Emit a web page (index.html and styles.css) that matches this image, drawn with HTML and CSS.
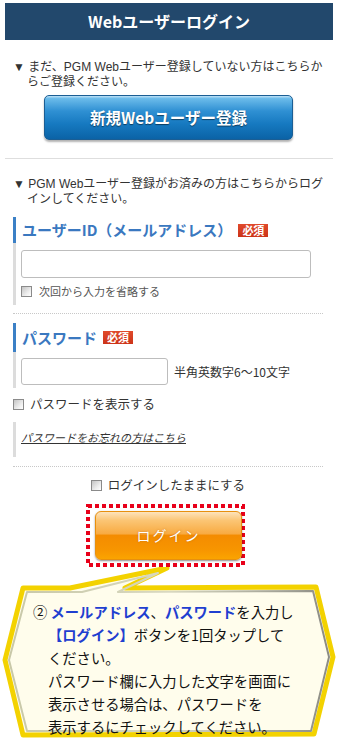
FILE: index.html
```html
<!DOCTYPE html>
<html lang="ja">
<head>
<meta charset="utf-8">
<title>Webユーザーログイン</title>
<link rel="stylesheet" href="styles.css">
</head>
<body>
<div class="page">
  <header class="header">Webユーザーログイン</header>
  <section class="register">
    <p class="note">▼ まだ、PGM Webユーザー登録していない方はこちらか<br>らご登録ください。</p>
    <a class="btn-blue" href="#">新規Webユーザー登録</a>
  </section>
  <div class="divider"></div>
  <section class="login">
    <p class="note">▼ PGM Webユーザー登録がお済みの方はこちらからログ<br>インしてください。</p>
    <div class="field">
      <div class="label-row"><span class="label">ユーザーID（メールアドレス）</span><span class="req">必須</span></div>
      <div class="field-body">
        <input class="input input-wide" type="text">
        <label class="check small"><input type="checkbox" class="cb"><span>次回から入力を省略する</span></label>
      </div>
    </div>
    <div class="dotted"></div>
    <div class="field pw">
      <div class="label-row pw-row"><span class="label">パスワード</span><span class="req pw-req">必須</span></div>
      <div class="field-body row">
        <input class="input input-short" type="password"><span class="hint">半角英数字6～10文字</span>
      </div>
    </div>
    <label class="check show-pw"><input type="checkbox" class="cb"><span>パスワードを表示する</span></label>
    <div class="forgot"><a href="#">パスワードをお忘れの方はこちら</a></div>
    <div class="dotted second"></div>
    <label class="check keep"><input type="checkbox" class="cb"><span>ログインしたままにする</span></label>
    <div class="login-frame">
      <svg class="frame-svg" width="159" height="63" viewBox="0 0 159 63"><rect x="2" y="2" width="155" height="59" fill="none" stroke="#e8001a" stroke-width="4" stroke-dasharray="4 3"/></svg>
      <a class="btn-orange" href="#">ログイン</a>
    </div>
  </section>
  <div class="callout">
    <svg class="callout-bg" width="340" height="171" viewBox="0 0 340 171">
      <defs>
        <linearGradient id="bevel" x1="0" y1="0" x2="1" y2="0">
          <stop offset="0" stop-color="#c8c8a8"/>
          <stop offset="0.5" stop-color="#d8d8c0"/>
          <stop offset="1" stop-color="#8c8c84"/>
        </linearGradient>
      </defs>
      <polygon points="23,21 70,21 167,1 125,21 316,20 333,90 314,167 23,168 5,93" fill="#fffdec" stroke="#f3d200" stroke-width="5" stroke-linejoin="round"/>
      <polygon points="27,25 82,25 158,6 118,25 313,24 329,90 311,164 27,164 9,93" fill="none" stroke="url(#bevel)" stroke-width="2" stroke-linejoin="round"/>
    </svg>
    <p class="callout-text">②&nbsp;<span class="blue">メールアドレス</span>、<span class="blue">パスワード</span>を入力し<br><span class="blue">【ログイン】</span>ボタンを1回タップして<br>ください。<br>パスワード欄に入力した文字を画面に<br>表示させる場合は、パスワードを<br>表示するにチェックしてください。</p>
  </div>
</div>
</body>
</html>
```

FILE: styles.css
```css
* { box-sizing: border-box; }
html, body { margin: 0; padding: 0; background: #fff; }
body {
  width: 340px;
  font-family: "Noto Sans CJK JP", "Noto Sans", sans-serif;
  color: #333;
}
.page { width: 340px; overflow: hidden; }

.header {
  margin: 3px 7px 0 5px;
  height: 37px;
  background: #22486c;
  color: #fff;
  font-weight: bold;
  font-size: 16px;
  line-height: 37px;
  text-align: center;
}

.register { margin: 0 7px 0 5px; }
.note {
  margin: 20px 0 0 8px;
  padding-left: 14px;
  text-indent: -14px;
  font-family: "Liberation Sans", "Noto Sans CJK JP", sans-serif;
  font-size: 12px;
  line-height: 15px;
  white-space: nowrap;
}

.btn-blue {
  display: block;
  margin: 5px 0 0 39px;
  width: 249px;
  height: 45px;
  border: 1px solid #1b5e94;
  border-radius: 5px;
  background: linear-gradient(#bfe2f7 0%, #6bbbea 6%, #2f90d3 35%, #1679c0 65%, #0b63a6 100%);
  box-shadow: 0 2px 2px rgba(0, 0, 0, 0.3);
  color: #fff;
  font-weight: bold;
  font-size: 15.5px;
  line-height: 43px;
  text-align: center;
  text-decoration: none;
  text-shadow: 0 1px 1px rgba(0, 0, 0, 0.5);
}

.divider {
  margin: 18px 7px 0 5px;
  height: 1px;
  background: #dedede;
}

.login { padding: 0 17px 0 13px; }
.login .note { margin: 18px 0 0 0; }

.field { margin-top: 10px; }
.field.pw { margin-top: 9px; }
.label-row {
  display: flex;
  align-items: center;
  height: 26px;
  padding-left: 6px;
  border-left: 3px solid #3b80c6;
}
.label-row.pw-row { height: 29px; }
.label {
  color: #3a78c0;
  font-weight: bold;
  font-size: 15px;
  line-height: 20px;
}
.req {
  width: 30px;
  height: 13px;
  margin-left: 6px;
  background: linear-gradient(#e04a2c, #cc3318);
  color: #fff;
  font-weight: bold;
  font-size: 11px;
  line-height: 13px;
  text-align: center;
}
.req.pw-req { margin-left: 6px; }

.field-body {
  border-left: 3px solid #dcdcdc;
  padding: 7px 0 7px 5px;
}
.field-body.row {
  display: flex;
  align-items: center;
  padding: 6px 0 3px 5px;
}
.input {
  display: block;
  margin: 0;
  padding: 0 4px;
  height: 28px;
  border: 1px solid #bdbdbd;
  border-radius: 3px;
  background: #fff;
}
.input-wide { width: 290px; }
.input-short { width: 147px; height: 27px; }
.hint { margin-left: 6px; font-size: 12px; line-height: 16px; }

.check {
  display: flex;
  align-items: center;
  gap: 6px;
  font-size: 12.5px;
  line-height: 16px;
}
.check.small {
  margin-top: 6px;
  gap: 7px;
  font-size: 11px;
  line-height: 14px;
  color: #555;
}
.cb {
  -webkit-appearance: none;
  appearance: none;
  flex: none;
  width: 11px;
  height: 11px;
  margin: 0;
  border: 1px solid #8a8a8a;
  background: linear-gradient(135deg, #c4c4c4, #efefef 65%, #fff);
}
.show-pw { margin-top: 8px; }

.forgot {
  margin-top: 10px;
  border-left: 3px solid #dcdcdc;
  padding: 7px 0 12px 5px;
  font-size: 11px;
  line-height: 16px;
}
.forgot a { color: #333; font-style: italic; text-decoration: underline; }

.dotted { margin-top: 8px; border-top: 1px dotted #c8c8c8; }
.dotted.second { margin-top: 9px; }

.keep { justify-content: center; margin-top: 10px; }

.login-frame {
  position: relative;
  margin: 11px 0 0 73px;
  width: 159px;
  height: 63px;
  padding: 7px 3px 7px 9px;
}
.frame-svg { position: absolute; left: 0; top: 0; }
.btn-orange {
  position: relative;
  display: block;
  height: 49px;
  border: 1px solid #e8900e;
  border-radius: 6px;
  background: linear-gradient(#fde3bc 0%, #fbc574 18%, #f8ab42 46%, #f48c00 50%, #f79500 80%, #fba400 100%);
  box-shadow: 0 1px 2px rgba(0, 0, 0, 0.45);
  color: #fff;
  font-size: 14px;
  letter-spacing: 2px;
  line-height: 47px;
  text-align: center;
  text-decoration: none;
  text-shadow: 0 0 2px rgba(160, 80, 0, 0.6);
}

.callout { position: relative; width: 340px; height: 171px; }
.callout-bg { position: absolute; left: 0; top: 0; }
.callout-text {
  position: relative;
  margin: 0;
  padding: 33px 0 0 48px;
  text-indent: -15px;
  font-size: 14.3px;
  line-height: 23px;
  color: #111;
  white-space: nowrap;
}
.blue { color: #1f3fd0; font-weight: bold; }
```
